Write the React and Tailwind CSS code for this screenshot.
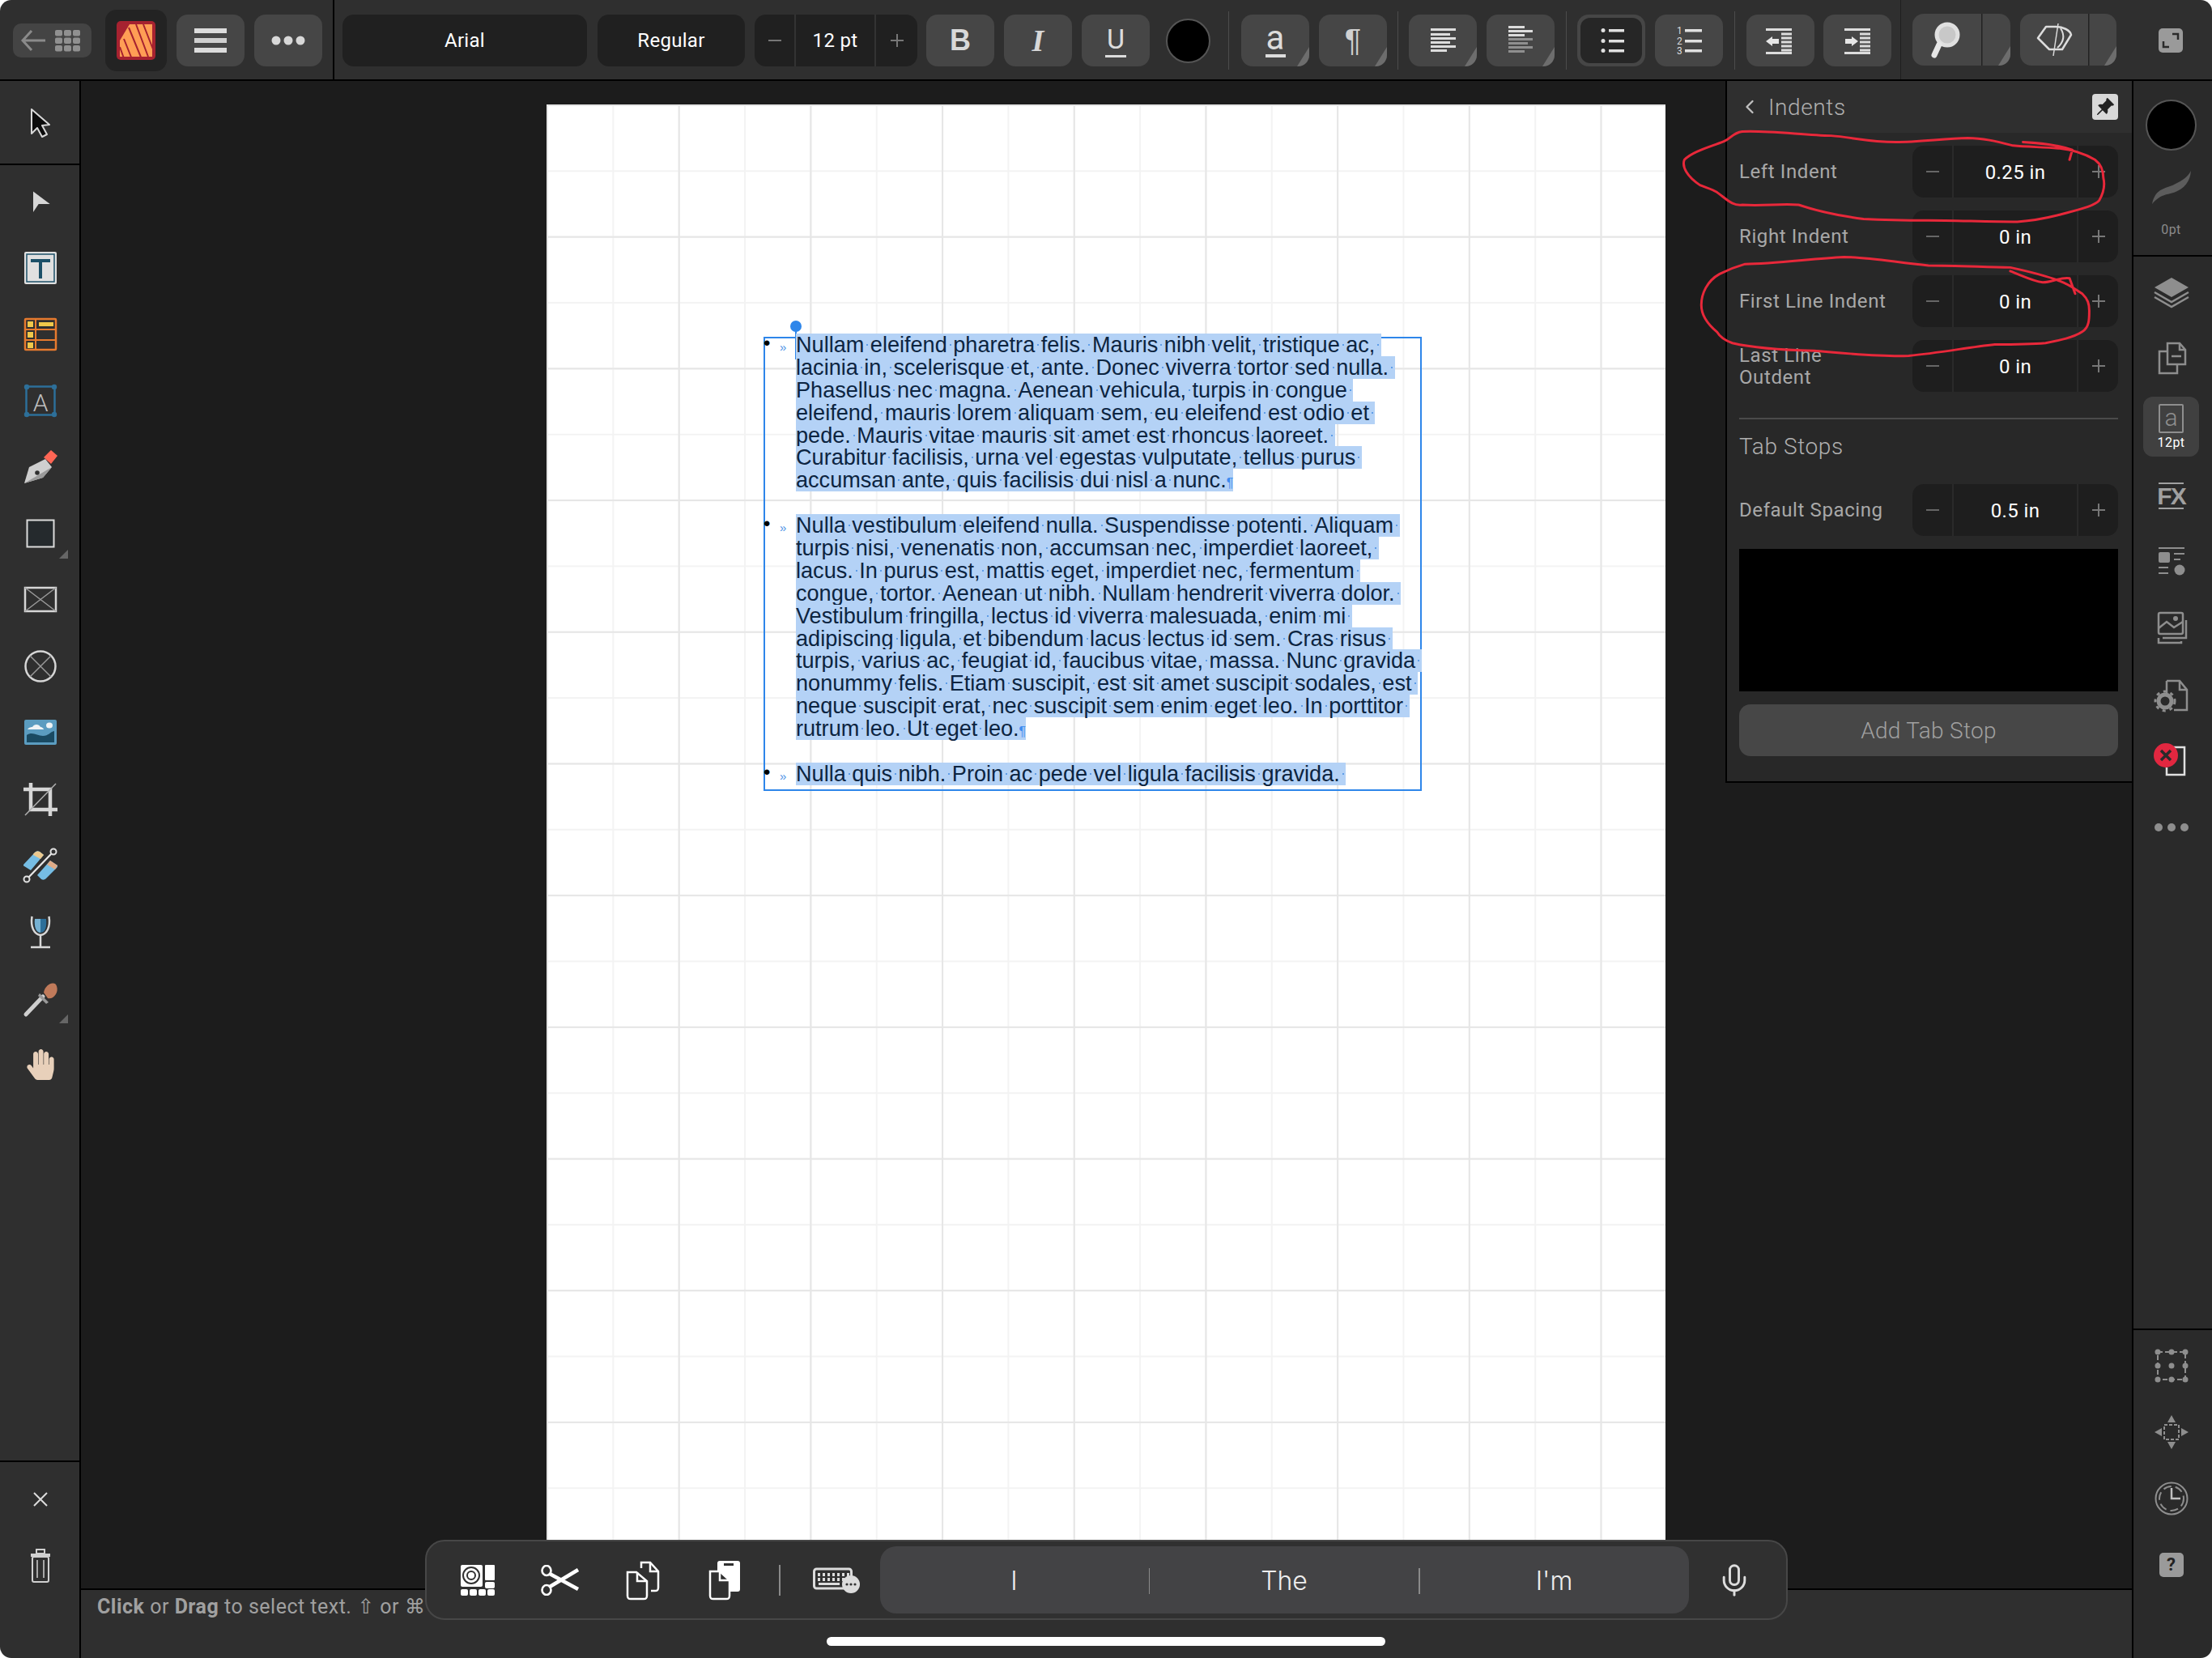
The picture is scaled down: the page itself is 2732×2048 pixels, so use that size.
import React from 'react';
import { BsPinAngleFill } from 'react-icons/bs';
import { FaHandPaper } from 'react-icons/fa';
import { Mic, ChevronLeft } from 'lucide-react';

const P1 = [
  'Nullam eleifend pharetra felis. Mauris nibh velit, tristique ac, ',
  'lacinia in, scelerisque et, ante. Donec viverra tortor sed nulla. ',
  'Phasellus nec magna. Aenean vehicula, turpis in congue ',
  'eleifend, mauris lorem aliquam sem, eu eleifend est odio et ',
  'pede. Mauris vitae mauris sit amet est rhoncus laoreet. ',
  'Curabitur facilisis, urna vel egestas vulputate, tellus purus ',
  'accumsan ante, quis facilisis dui nisl a nunc.',
];
const P2 = [
  'Nulla vestibulum eleifend nulla. Suspendisse potenti. Aliquam ',
  'turpis nisi, venenatis non, accumsan nec, imperdiet laoreet, ',
  'lacus. In purus est, mattis eget, imperdiet nec, fermentum ',
  'congue, tortor. Aenean ut nibh. Nullam hendrerit viverra dolor. ',
  'Vestibulum fringilla, lectus id viverra malesuada, enim mi ',
  'adipiscing ligula, et bibendum lacus lectus id sem. Cras risus ',
  'turpis, varius ac, feugiat id, faucibus vitae, massa. Nunc gravida ',
  'nonummy felis. Etiam suscipit, est sit amet suscipit sodales, est ',
  'neque suscipit erat, nec suscipit sem enim eget leo. In porttitor ',
  'rutrum leo. Ut eget leo.',
];
const P3 = ['Nulla quis nibh. Proin ac pede vel ligula facilisis gravida. '];

function Line({ text, pilcrow }) {
  const parts = text.split(' ');
  return (
    <div className="h-[27.9px] leading-[27.9px] whitespace-pre">
      <span className="inline-block h-[27.9px] bg-[#b4d2f6] text-[#0c2440]">
        {parts.map((w, i) => (
          <React.Fragment key={i}>
            {w}
            {i < parts.length - 1 && (
              <span className="relative">
                {' '}
                <span className="absolute left-[3px] top-[15px] w-[2px] h-[2px] bg-[#5e9de8]" />
              </span>
            )}
          </React.Fragment>
        ))}
        {pilcrow && <span className="text-[#3d8bf0] text-[16px] font-['Liberation_Sans',sans-serif]">¶</span>}
      </span>
    </div>
  );
}

function Para({ lines, pilcrow, className = '' }) {
  return (
    <div className={`relative ${className}`}>
      <span className="absolute left-[-40px] top-[-2px] text-[#000] text-[24px] leading-[27.9px]">•</span>
      <span className="absolute left-[-20px] top-[3px] text-[#4f93e6] text-[15px] leading-[27.9px]">»</span>
      {lines.map((l, i) => (
        <Line key={i} text={l} pilcrow={pilcrow && i === lines.length - 1} />
      ))}
    </div>
  );
}

function Corner() {
  return (
    <svg width="15" height="24" viewBox="0 0 15 24" className="absolute right-0 bottom-0">
      <polygon points="15,0 15,24 0,24" fill="#6d6d6d" />
    </svg>
  );
}

function Tile({ w = 'w-[84px]', corner, className = '', children }) {
  return (
    <div className={`relative h-[64px] ${w} rounded-[14px] overflow-hidden bg-[#464646] flex items-center justify-center shrink-0 ${className}`}>
      {children}
      {corner && <Corner />}
    </div>
  );
}

const Div = ({ className = '' }) => <div className={`w-[1px] h-[72px] bg-[#4c4c4c] shrink-0 ${className}`} />;

function Bars({ rows }) {
  return (
    <svg width="84" height="64" viewBox="0 0 84 64">
      {rows.map(([x, y, w, h, c], i) => (
        <rect key={i} x={x} y={y} width={w} height={h} fill={c || '#dcdcdc'} />
      ))}
    </svg>
  );
}

function TopBar() {
  return (
    <div className="h-[100px] shrink-0 bg-[#2f2f2f] border-b-2 border-black flex items-center pl-[16px] pt-[2px] relative">
      <div className="w-[97px] h-[42px] rounded-[10px] bg-[#444] flex items-center justify-center shrink-0">
        <svg width="97" height="42" viewBox="0 0 97 42">
          <path d="M40 21H13M23 9L12 21L23 33" stroke="#8a8a8a" strokeWidth="3" fill="none" />
          {[0, 1, 2].map((r) =>
            [0, 1, 2].map((c) => <rect key={`${r}${c}`} x={52 + c * 11} y={8 + r * 9.5} width="9" height="7.5" rx="2" fill="#909090" />)
          )}
        </svg>
      </div>
      <div className="ml-[17px] w-[76px] h-[76px] rounded-[14px] bg-[#232323] flex items-center justify-center shrink-0">
        <svg width="48" height="48" viewBox="0 0 48 48">
          <rect width="48" height="48" rx="5" fill="#a62230" />
          <path d="M16 4H44V44H4V24Z" fill="#ff9e55" />
          <path d="M15 8L31 47M24 4L39 44M33 4L47 40M9 22L19 47M4 32L9 46" stroke="#a62230" strokeWidth="2" fill="none" />
        </svg>
      </div>
      <Tile className="ml-[12px]">
        <Bars rows={[[22, 17, 40, 6], [22, 29, 40, 6, '#cfcfcf'], [22, 41, 40, 6]]} />
      </Tile>
      <Tile className="ml-[12px]">
        <svg width="84" height="64" viewBox="0 0 84 64">
          <circle cx="27" cy="32" r="5.5" fill="#d8d8d8" />
          <circle cx="42" cy="32" r="5.5" fill="#d8d8d8" />
          <circle cx="57" cy="32" r="5.5" fill="#d8d8d8" />
        </svg>
      </Tile>
      <div className="ml-[13px] w-[2px] h-[98px] bg-black shrink-0 -mt-[2px]" />
      <div className="ml-[10px] w-[302px] h-[64px] rounded-[14px] bg-[#202020] text-white text-[24px] flex items-center justify-center shrink-0 tracking-[0.3px]">Arial</div>
      <div className="ml-[13px] w-[182px] h-[64px] rounded-[14px] bg-[#202020] text-white text-[24px] flex items-center justify-center shrink-0 tracking-[0.3px]">Regular</div>
      <div className="ml-[12px] w-[201px] h-[64px] rounded-[14px] bg-[#202020] text-white text-[24px] flex items-center shrink-0 tracking-[0.3px]">
        <div className="w-[51px] h-full border-r-2 border-[#333] flex items-center justify-center"><span className="w-[16px] h-[2px] bg-[#777]" /></div>
        <div className="flex-1 text-center">12 pt</div>
        <div className="w-[53px] h-full border-l-2 border-[#333] flex items-center justify-center relative">
          <span className="w-[16px] h-[2px] bg-[#777]" />
          <span className="absolute w-[2px] h-[16px] bg-[#777]" />
        </div>
      </div>
      <Tile className="ml-[11px] text-[#d8d8d8] text-[36px] font-bold font-['Liberation_Sans',sans-serif]">B</Tile>
      <Tile className="ml-[12px] text-[#d8d8d8] text-[38px] font-bold italic font-['Liberation_Serif',serif]">I</Tile>
      <Tile className="ml-[12px]">
        <div className="flex flex-col items-center">
          <span className="text-[#dcdcdc] text-[34px] leading-[36px]">U</span>
          <span className="w-[26px] h-[3px] bg-[#dcdcdc] mt-[2px]" />
        </div>
      </Tile>
      <div className="ml-[20px] w-[55px] h-[55px] rounded-full bg-black border-2 border-[#555] shrink-0" />
      <Div className="ml-[22px]" />
      <Tile className="ml-[15px]" corner>
        <div className="flex flex-col items-center">
          <span className="text-[#dcdcdc] text-[42px] leading-[36px]">a</span>
          <span className="w-[25px] h-[4px] bg-[#dcdcdc] mt-[2px]" />
        </div>
      </Tile>
      <Tile className="ml-[12px] text-[#d0d0d0] text-[38px] font-['Liberation_Sans',sans-serif]" corner>¶</Tile>
      <Div className="ml-[13px]" />
      <Tile className="ml-[13px]" corner>
        <Bars rows={[[27, 17, 31, 3], [27, 23, 24, 3], [27, 28, 31, 3], [27, 33, 24, 3], [27, 38, 31, 3], [27, 43, 20, 3]]} />
      </Tile>
      <Tile className="ml-[12px]" corner>
        <Bars rows={[[27, 14, 20, 3], [27, 19, 30, 3], [27, 24, 20, 3], [27, 29, 30, 3, '#8f8f8f'], [27, 34, 24, 3, '#8f8f8f'], [27, 39, 30, 3, '#8f8f8f'], [27, 44, 20, 3, '#8f8f8f']]} />
      </Tile>
      <Div className="ml-[14px]" />
      <Tile className="ml-[13px]">
        <div className="absolute inset-[4px] rounded-[12px] bg-[#262626]" />
        <svg width="84" height="64" viewBox="0 0 84 64" className="relative">
          {[18, 31, 43].map((y) => (
            <g key={y}>
              <circle cx="32" cy={y + 1.5} r="2.5" fill="#e0e0e0" />
              <rect x="39" y={y} width="19" height="3.5" fill="#e0e0e0" />
            </g>
          ))}
        </svg>
      </Tile>
      <Tile className="ml-[12px]">
        <svg width="84" height="64" viewBox="0 0 84 64">
          {[['1', 18], ['2', 31], ['3', 43]].map(([n, y]) => (
            <g key={n}>
              <text x="27" y={y + 6} fontSize="12" fill="#dcdcdc" fontFamily="Roboto">{n}</text>
              <rect x="37" y={y} width="21" height="3.5" fill="#e0e0e0" />
            </g>
          ))}
        </svg>
      </Tile>
      <Div className="ml-[14px]" />
      <Tile className="ml-[14px]">
        <svg width="84" height="64" viewBox="0 0 84 64">
          <rect x="24" y="17" width="32" height="3" fill="#dcdcdc" />
          <rect x="24" y="46" width="32" height="3" fill="#dcdcdc" />
          {[23, 28, 33, 38, 43].map((y) => <rect key={y} x="43" y={y - 0.5} width="13" height="3" fill="#dcdcdc" />)}
          <path d="M24 33L32 27V30H40V36H32V39Z" fill="#e6e6e6" />
        </svg>
      </Tile>
      <Tile className="ml-[11px]">
        <svg width="84" height="64" viewBox="0 0 84 64">
          <rect x="26" y="17" width="32" height="3" fill="#dcdcdc" />
          <rect x="26" y="46" width="32" height="3" fill="#dcdcdc" />
          {[23, 28, 33, 38, 43].map((y) => <rect key={y} x="45" y={y - 0.5} width="13" height="3" fill="#dcdcdc" />)}
          <path d="M43 33L35 27V30H27V36H35V39Z" fill="#e6e6e6" />
        </svg>
      </Tile>
      <div className="ml-[11px] w-[1px] h-[98px] bg-[#1f1f1f] shrink-0 -mt-[2px]" />
      <Tile w="w-[121px]" className="ml-[14px] -mt-[2px]" corner>
        <svg width="121" height="64" viewBox="0 0 121 64" className="absolute left-0 top-0">
          <circle cx="43" cy="26" r="13" fill="#c8c8c8" stroke="#e0e0e0" strokeWidth="5" />
          <path d="M33 38L27 51" stroke="#e6e6e6" strokeWidth="7" strokeLinecap="round" />
          <rect x="85" y="0" width="1.5" height="64" fill="#222" />
        </svg>
      </Tile>
      <Tile w="w-[119px]" className="ml-[12px] -mt-[2px]" corner>
        <svg width="119" height="64" viewBox="0 0 119 64" className="absolute left-0 top-0">
          <path d="M22 30L32 16H44C52 16 62 20 63 26L52 44H36Z" fill="none" stroke="#dcdcdc" strokeWidth="2.5" strokeLinejoin="round" />
          <path d="M47 12L41 52" stroke="#dcdcdc" strokeWidth="1.5" />
          <path d="M50 18C55 26 55 34 46 42" stroke="#dcdcdc" strokeWidth="2" fill="none" />
          <rect x="84" y="0" width="1.5" height="64" fill="#222" />
        </svg>
      </Tile>
      <div className="ml-[52px] w-[30px] h-[30px] rounded-[5px] bg-[#9a9a9a] shrink-0">
        <svg width="30" height="30" viewBox="0 0 30 30">
          <path d="M17 7H24V14M13 23H6V16" stroke="#2a2a2a" strokeWidth="2.5" fill="none" />
        </svg>
      </div>
    </div>
  );
}

const ToolBox = ({ corner, children }) => (
  <div className="relative h-[82px] flex items-center justify-center">
    <svg width="60" height="60" viewBox="0 0 60 60">{children}</svg>
    {corner && (
      <svg width="11" height="11" viewBox="0 0 11 11" className="absolute left-[71px] top-[61px]">
        <polygon points="11,0 11,11 0,11" fill="#666" />
      </svg>
    )}
  </div>
);

function LeftBar() {
  return (
    <div className="w-[100px] shrink-0 bg-[#2f2f2f] border-r-2 border-black flex flex-col">
      <div className="h-[104px] shrink-0 border-b-2 border-black flex items-center justify-center pl-[2px] pt-[2px]">
        <svg width="60" height="60" viewBox="0 0 60 60">
          <path d="M19 13V43L26 36L32 47L38 44L32 33L41 32Z" fill="#0c0c0c" stroke="#d8d8d8" strokeWidth="2" strokeLinejoin="round" />
        </svg>
      </div>
      <div className="pt-[4px] pl-[2px]">
        <ToolBox><polygon points="21,17.5 41.7,33 27.7,33 21,43" fill="#d6d6d6" /></ToolBox>
        <ToolBox>
          <rect x="10" y="10" width="40" height="40" rx="2" fill="#e0e0e0" />
          <rect x="13" y="13" width="34" height="34" fill="none" stroke="#1c5068" strokeWidth="1.5" />
          <path d="M18 19H42V23H32V43H28V23H18Z" fill="#1c5068" />
        </ToolBox>
        <ToolBox>
          <rect x="11" y="11" width="38" height="38" rx="1" fill="none" stroke="#e67a2e" strokeWidth="2.5" />
          <path d="M11 24H49M11 37H49M24 11V49" stroke="#e67a2e" strokeWidth="2" />
          <rect x="14" y="14" width="7" height="7" fill="#f0c84a" />
          <rect x="14" y="27" width="7" height="7" fill="#f0c84a" />
          <rect x="14" y="40" width="7" height="7" fill="#f0c84a" />
          <rect x="28" y="15" width="18" height="5" fill="#f0c84a" />
        </ToolBox>
        <ToolBox>
          <rect x="12.5" y="12.5" width="35" height="35" fill="none" stroke="#2d6f99" strokeWidth="2.5" />
          {[[13, 13], [47, 13], [13, 47], [47, 47]].map(([x, y]) => <circle key={x + '' + y} cx={x} cy={y} r="3.2" fill="#2d6f99" />)}
          <text x="30" y="43" textAnchor="middle" fontSize="30" fontWeight="300" fill="#bdbdbd" fontFamily="Roboto">A</text>
        </ToolBox>
        <ToolBox>
          <path d="M10 50L16 30L36 20L44 30L33 43Z" fill="#cfcfcf" />
          <path d="M10 50L44 30L33 43Z" fill="#9a9a9a" />
          <circle cx="26" cy="37" r="2.8" fill="#2f2f2f" />
          <path d="M34 18L43 9L51 16L43 26Z" fill="#ff6655" />
        </ToolBox>
        <ToolBox corner>
          <rect x="13.5" y="13.5" width="33" height="33" fill="#252a2d" stroke="#dcdcdc" strokeWidth="2" />
        </ToolBox>
        <ToolBox>
          <rect x="11" y="15" width="38" height="29" fill="none" stroke="#d6d6d6" strokeWidth="2.5" />
          <path d="M11 15L49 44M49 15L11 44" stroke="#9a9a9a" strokeWidth="1.5" />
        </ToolBox>
        <ToolBox>
          <circle cx="30" cy="30" r="18.5" fill="none" stroke="#d6d6d6" strokeWidth="2.5" />
          <path d="M17 17L43 43M43 17L17 43" stroke="#9a9a9a" strokeWidth="1.5" />
        </ToolBox>
        <ToolBox>
          <rect x="10" y="14" width="40" height="31" rx="2" fill="#5b9cc0" />
          <path d="M13 33C20 28 26 34 33 34C40 34 42 29 47 28V42H13Z" fill="#1a4a62" />
          <path d="M14 26C16 23 19 23 20 23C22 19 28 19 30 23C32 23 34 25 34 26Z" fill="#eef3f5" />
          <ellipse cx="41" cy="21" rx="4" ry="3.5" fill="#eef3f5" />
        </ToolBox>
        <ToolBox>
          <path d="M18 10V43H51M9 18H42V51" stroke="#d6d6d6" strokeWidth="4.5" fill="none" />
          <path d="M11 50L49 11" stroke="#b0b0b0" strokeWidth="1.5" />
        </ToolBox>
        <ToolBox>
          <path d="M9 29L23 14C25 12 27 12 29 13L34 17L18 36L10 31C9 31 9 30 9 29Z" fill="#76bde4" />
          <path d="M21 16C24 12 27 12 29 13L34 17L30 22L21 17Z" fill="#ecc98f" />
          <path d="M26 42L42 24L51 30C51 31 51 32 50 33L37 46C35 48 33 48 31 47Z" fill="#76bde4" />
          <path d="M38 29L42 24L51 30L48 35Z" fill="#dfab87" />
          <path d="M15 45L44 15" stroke="#e8e8e8" strokeWidth="2.2" />
          <circle cx="13" cy="47" r="3.5" fill="#2f2f2f" stroke="#e0e0e0" strokeWidth="2" />
          <circle cx="46" cy="13" r="3.5" fill="#2f2f2f" stroke="#e0e0e0" strokeWidth="2" />
        </ToolBox>
        <ToolBox>
          <path d="M19.5 11C17.5 24 22 33 30 34C38 33 42.5 24 40.5 11" fill="none" stroke="#d8d8d8" strokeWidth="2.5" />
          <path d="M23 14H37C38 24 36 31 30 31C24 31 22 24 23 14Z" fill="#2d6f99" />
          <path d="M30 14H23C22 24 25 31 30 31Z" fill="#76b1d2" />
          <path d="M30 34V48M18 49H42" stroke="#d8d8d8" strokeWidth="2.5" />
        </ToolBox>
        <ToolBox corner>
          <path d="M12 50L33 28" stroke="#cfcfcf" strokeWidth="5" strokeLinecap="round" />
          <path d="M29 24L40 35L37 37L27 27Z" fill="#9a9a9a" />
          <path d="M34 23C36 12 48 8 50 15C53 23 46 32 39 30Z" fill="#c07a5a" />
        </ToolBox>
        <div className="h-[82px] flex items-center justify-center text-[#e8d0ba] text-[38px]"><FaHandPaper /></div>
      </div>
      <div className="flex-1" />
      <div className="h-[244px] shrink-0 border-t-2 border-black flex flex-col items-center pl-[2px]">
        <svg width="60" height="60" viewBox="0 0 60 60" className="mt-[16px]">
          <path d="M22 22L38 38M38 22L22 38" stroke="#dcdcdc" strokeWidth="2" />
        </svg>
        <svg width="60" height="60" viewBox="0 0 60 60" className="mt-[22px]">
          <rect x="18" y="15" width="24" height="4" fill="#d0d0d0" />
          <rect x="25" y="10" width="10" height="5" fill="none" stroke="#d0d0d0" strokeWidth="2" />
          <rect x="20" y="19" width="20" height="31" rx="2" fill="none" stroke="#d0d0d0" strokeWidth="2" />
          <path d="M26 23V45M34 23V45" stroke="#d0d0d0" strokeWidth="1.5" />
        </svg>
      </div>
    </div>
  );
}

function Stepper({ value }) {
  return (
    <div className="w-[254px] h-[64px] rounded-[14px] bg-[#1e1e1e] flex items-center text-[24px] shrink-0">
      <div className="w-[51px] h-full border-r-2 border-[#2a2a2a] flex items-center justify-center">
        <span className="w-[16px] h-[2px] bg-[#666]" />
      </div>
      <div className="flex-1 text-center text-white tracking-[0.4px] pt-[2px]">{value}</div>
      <div className="w-[51px] h-full border-l-2 border-[#2a2a2a] flex items-center justify-center relative">
        <span className="w-[16px] h-[2px] bg-[#777]" />
        <span className="absolute w-[2px] h-[16px] bg-[#777]" />
      </div>
    </div>
  );
}

function Row({ label, value, className = '' }) {
  return (
    <div className={`flex items-center justify-between ${className}`}>
      <div className="text-[#a8a8a8] text-[24px] leading-[27px] w-[200px] tracking-[0.6px] pt-[1px]">{label}</div>
      <Stepper value={value} />
    </div>
  );
}

function IndentsPanel() {
  return (
    <div className="absolute right-0 top-0 w-[502px] bg-[#282828] border-l-2 border-b-2 border-black flex flex-col">
      <div className="h-[64px] bg-[#2f2f2f] flex items-center pl-[15px] pr-[17px] text-[#b0b0b0]">
        <ChevronLeft size={28} strokeWidth={2} className="text-[#c0c0c0] ml-[-1px]" />
        <span className="ml-[9px] text-[28px] font-light tracking-[0.6px] pt-[2px]">Indents</span>
        <span className="ml-auto w-[32px] h-[32px] rounded-[4px] bg-[#d8d8d8] text-[#222] flex items-center justify-center text-[24px]"><BsPinAngleFill /></span>
      </div>
      <div className="px-[15px] pr-[17px] pt-[16px] pb-[31px] flex flex-col">
        <Row label="Left Indent" value="0.25 in" />
        <Row label="Right Indent" value="0 in" className="mt-[16px]" />
        <Row label="First Line Indent" value="0 in" className="mt-[16px]" />
        <Row label={<>Last Line<br />Outdent</>} value="0 in" className="mt-[16px]" />
        <div className="h-[2px] bg-[#4a4a4a] mt-[32px]" />
        <div className="h-[67px] flex items-center text-[#b0b0b0] text-[28px] font-light tracking-[0.6px]">Tab Stops</div>
        <Row label="Default Spacing" value="0.5 in" className="mt-[13px]" />
        <div className="h-[176px] bg-black mt-[16px]" />
        <div className="h-[64px] mt-[16px] pt-[2px] rounded-[14px] bg-[#474747] flex items-center justify-center text-[#a0a0a0] text-[28px] font-light tracking-[0.3px]">Add Tab Stop</div>
      </div>
    </div>
  );
}

const RBox = ({ children, className = '' }) => (
  <div className={`h-[82px] flex items-center justify-center ${className}`}>
    <svg width="60" height="60" viewBox="0 0 60 60">{children}</svg>
  </div>
);

function RightBar() {
  const g = '#8e8e8e';
  return (
    <div className="w-[99px] shrink-0 bg-[#2a2a2a] border-l-2 border-black flex flex-col pr-[4px]">
      <div className="h-[217px] -mr-[4px] pr-[4px] shrink-0 border-b-2 border-black flex flex-col items-center">
        <div className="mt-[23px] w-[63px] h-[63px] rounded-full bg-black border-2 border-[#555]" />
        <svg width="50" height="42" viewBox="0 0 50 42" className="mt-[25px]">
          <path d="M1 41C5 20 20 22 30 16C38 12 45 8 49 0C48 14 40 22 30 26C20 30 12 28 1 41Z" fill="#5c5c5c" />
        </svg>
        <div className="text-[#8a8a8a] text-[16px] mt-[21px] leading-[20px] tracking-[0.5px]">0pt</div>
      </div>
      <RBox className="mt-[2px]">
        <path d="M30 13L51 25L30 37L9 25Z" fill={g} />
        <path d="M9 31L30 43L51 31M9 37L30 49L51 37" fill="none" stroke={g} strokeWidth="2.5" />
      </RBox>
      <RBox>
        <path d="M25 12H40L47 20V38H25Z" fill="none" stroke={g} strokeWidth="2.5" />
        <path d="M40 12V20H47M30 28H42" stroke={g} strokeWidth="2.5" fill="none" />
        <path d="M25 22H15V49H37V38" fill="none" stroke={g} strokeWidth="2.5" />
      </RBox>
      <div className="mt-[7px] mx-auto w-[69px] h-[74px] rounded-[12px] bg-[#404040] flex flex-col items-center pt-[9px] shrink-0">
        <div className="w-[31px] h-[36px] rounded-[2px] border-2 border-[#8e8e8e] flex items-center justify-center text-[#8e8e8e] text-[30px] leading-none font-light pb-[3px]">a</div>
        <div className="text-white text-[16px] leading-[20px] mt-[2px] tracking-[0.5px]">12pt</div>
      </div>
      <div className="h-[7px] shrink-0" />
      <div className="h-[82px] flex flex-col items-center justify-center text-[#a0a0a0]">
        <div className="w-[31px] h-[2px] bg-[#a0a0a0]" />
        <div className="text-[30px] leading-[29px] font-bold font-['Liberation_Sans',sans-serif] tracking-[-2px]">FX</div>
        <div className="w-[31px] h-[2px] bg-[#a0a0a0]" />
      </div>
      <RBox>
        <rect x="14" y="12" width="32" height="2" fill={g} />
        <rect x="14" y="18" width="14" height="13" rx="2" fill={g} />
        <path d="M33 20H46M33 27H41M14 37H26M14 44H26" stroke={g} strokeWidth="2" />
        <circle cx="40" cy="40" r="6.5" fill={g} />
      </RBox>
      <RBox>
        <rect x="14" y="11" width="30" height="26" rx="2" fill="none" stroke={g} strokeWidth="2.5" />
        <path d="M14 30L24 22L33 29L44 22" fill="none" stroke={g} strokeWidth="2.5" />
        <circle cx="35" cy="18" r="3" fill={g} />
        <path d="M48 20V42H19M14 42V48H42V46" fill="none" stroke={g} strokeWidth="2.5" />
      </RBox>
      <RBox>
        <path d="M24 13H40L49 24V49H33M24 13V28" fill="none" stroke={g} strokeWidth="2.5" />
        <path d="M40 13V24H49" fill="none" stroke={g} strokeWidth="2.5" />
        <circle cx="22" cy="38" r="8" fill="none" stroke={g} strokeWidth="5" />
        <circle cx="22" cy="38" r="12" fill="none" stroke={g} strokeWidth="3" strokeDasharray="4 5" />
      </RBox>
      <RBox>
        <path d="M30 13H46V47H24V38" fill="none" stroke="#e0e0e0" strokeWidth="2.5" />
        <circle cx="23" cy="23" r="15" fill="#e22740" />
        <path d="M17 17L29 29M29 17L17 29" stroke="#2a2a2a" strokeWidth="3.5" />
      </RBox>
      <RBox>
        <circle cx="14" cy="30" r="5" fill={g} />
        <circle cx="30" cy="30" r="5" fill={g} />
        <circle cx="46" cy="30" r="5" fill={g} />
      </RBox>
      <div className="flex-1" />
      <div className="h-[407px] -mr-[4px] pr-[4px] shrink-0 border-t-2 border-black pt-[3px]">
        <RBox>
          <rect x="13" y="13" width="34" height="34" fill="none" stroke={g} strokeWidth="2" strokeDasharray="6 3" />
          {[[13, 13], [30, 13], [47, 13], [13, 30], [30, 30], [47, 30], [13, 47], [30, 47], [47, 47]].map(([x, y]) => (
            <circle key={x + '' + y} cx={x} cy={y} r="3.5" fill={g} />
          ))}
        </RBox>
        <RBox>
          <path d="M30 9L35 18H25ZM30 51L25 42H35ZM9 30L18 25V35ZM51 30L42 35V25Z" fill={g} />
          <rect x="21" y="21" width="18" height="18" fill="none" stroke={g} strokeWidth="2" strokeDasharray="4 2" />
        </RBox>
        <RBox>
          <circle cx="30" cy="30" r="19.5" fill="none" stroke={g} strokeWidth="2" />
          <circle cx="30" cy="30" r="15" fill="none" stroke={g} strokeWidth="2" strokeDasharray="10 5" />
          <path d="M30 17V30H41" stroke="#c0c0c0" strokeWidth="2.5" fill="none" />
        </RBox>
        <div className="h-[82px] flex items-center justify-center">
          <div className="w-[30px] h-[30px] rounded-[5px] bg-[#9a9a9a] flex items-center justify-center text-[#222] text-[22px] font-bold leading-none">?</div>
        </div>
      </div>
    </div>
  );
}

function Page() {
  return (
    <div className="relative w-[1382px] h-[1900px] bg-white bg-[linear-gradient(to_right,#e6e6e6_2px,transparent_2px),linear-gradient(to_bottom,#e6e6e6_2px,transparent_2px),linear-gradient(to_right,#f3f3f3_2px,transparent_2px),linear-gradient(to_bottom,#f3f3f3_2px,transparent_2px)] bg-[size:162.7px_162.7px,162.7px_162.7px,81.35px_81.35px,81.35px_81.35px]">
      <div className="absolute left-[268px] top-[287px] w-[813px] h-[561px] border-2 border-[#2e86ea]" />
      <div className="absolute left-[301px] top-[267px] w-[14px] h-[14px] rounded-full bg-[#2e86ea]" />
      <div className="absolute left-[307px] top-[275px] w-[2px] h-[40px] bg-[#2e86ea]" />
      <div className="absolute left-[308px] top-[283px] text-[27.1px] font-['Liberation_Sans',Arial,sans-serif]">
        <Para lines={P1} pilcrow />
        <Para lines={P2} pilcrow className="mt-[27.9px]" />
        <Para lines={P3} className="mt-[27.9px]" />
      </div>
    </div>
  );
}

function ShortcutBar() {
  return (
    <div className="absolute left-[525px] top-[1902px] w-[1683px] h-[99px] rounded-[24px] bg-[#303030] border-2 border-[#474747] flex items-center pl-[12px] text-white">
      <div className="w-[102px] flex justify-center">
        <svg width="44" height="40" viewBox="0 0 44 40">
          <rect x="1" y="1" width="27" height="27" rx="2" fill="#fff" />
          <circle cx="14" cy="14" r="10" fill="none" stroke="#303030" strokeWidth="2" />
          <circle cx="14" cy="14" r="5" fill="none" stroke="#303030" strokeWidth="2" />
          <rect x="31" y="1" width="12" height="19" rx="1" fill="#fff" />
          <rect x="31" y="22" width="12" height="8" rx="2" fill="#fff" />
          <rect x="1" y="31" width="9" height="8" rx="2" fill="#fff" />
          <rect x="12" y="31" width="9" height="8" rx="2" fill="#fff" />
          <rect x="23" y="31" width="9" height="8" rx="2" fill="#fff" />
          <rect x="34" y="31" width="9" height="8" rx="2" fill="#fff" />
        </svg>
      </div>
      <div className="w-[102px] flex justify-center">
        <svg width="50" height="38" viewBox="0 0 50 38">
          <ellipse cx="8" cy="7" rx="5.5" ry="6" fill="none" stroke="#fff" strokeWidth="2.6" />
          <ellipse cx="8" cy="31" rx="5.5" ry="6" fill="none" stroke="#fff" strokeWidth="2.6" />
          <path d="M12 11L47 30M12 27L47 6" stroke="#fff" strokeWidth="4.5" />
        </svg>
      </div>
      <div className="w-[102px] flex justify-center">
        <svg width="44" height="50" viewBox="0 0 44 50" fill="none" stroke="#fff" strokeWidth="2.5">
          <path d="M20 10V3H31L41 14V34C41 37 40 38 37 38H32" />
          <path d="M31 3V14H41" />
          <path d="M3 15H14L27 26V44C27 47 26 48 23 48H7C4 48 3 47 3 44Z" fill="#303030" />
          <path d="M15 15V26H27" />
        </svg>
      </div>
      <div className="w-[102px] flex justify-center">
        <svg width="44" height="50" viewBox="0 0 44 50">
          <rect x="12" y="1" width="28" height="38" rx="3" fill="#fff" />
          <rect x="20" y="4" width="12" height="3" fill="#303030" />
          <path d="M3 14H15L27 25V44C27 47 26 48 23 48H7C4 48 3 47 3 44Z" fill="#303030" stroke="#fff" strokeWidth="2.5" />
          <path d="M15 14V25H27" stroke="#fff" strokeWidth="2.5" fill="none" />
        </svg>
      </div>
      <div className="ml-[15px] w-[1.5px] h-[38px] bg-[#8a8a8a]" />
      <div className="ml-[40px] w-[60px] shrink-0">
        <svg width="58" height="34" viewBox="0 0 58 34">
          <rect x="1.5" y="3" width="46" height="24" rx="3" fill="none" stroke="#dcdcdc" strokeWidth="3" />
          {[7, 13, 19, 25, 31, 37, 43].map((x) => <rect key={x} x={x - 1} y="8" width="3" height="4" fill="#dcdcdc" />)}
          {[7, 13, 19, 25, 31, 37].map((x) => <rect key={x} x={x - 1} y="14" width="3" height="4" fill="#dcdcdc" />)}
          <rect x="7" y="20" width="26" height="3" fill="#dcdcdc" />
          <circle cx="47" cy="22" r="11" fill="#dcdcdc" />
          <circle cx="42" cy="22" r="1.6" fill="#333" />
          <circle cx="47" cy="22" r="1.6" fill="#333" />
          <circle cx="52" cy="22" r="1.6" fill="#333" />
        </svg>
      </div>
      <div className="ml-[23px] pt-[2px] w-[999px] h-[83px] rounded-[20px] bg-[#434345] flex items-center font-['Inter',sans-serif] font-light text-[32px] text-[#eee] shrink-0">
        <div className="flex-1 text-center">I</div>
        <div className="w-[1.5px] h-[32px] bg-[#8a8a8a]" />
        <div className="flex-1 text-center">The</div>
        <div className="w-[1.5px] h-[32px] bg-[#8a8a8a]" />
        <div className="flex-1 text-center">I'm</div>
      </div>
      <div className="flex-1 flex justify-center pr-[8px]">
        <Mic size={44} strokeWidth={1.6} className="text-[#ddd]" />
      </div>
    </div>
  );
}

export default function App() {
  return (
    <div className="w-[2732px] h-[2048px] bg-white">
      <div className="relative w-[2732px] h-[2048px] rounded-[14px] overflow-hidden flex flex-col font-['Roboto',sans-serif]">
        <TopBar />
        <div className="flex flex-1 min-h-0">
          <LeftBar />
          <div className="flex-1 flex flex-col min-w-0">
            <div className="relative flex-1 min-h-0 bg-[#1c1c1c] pl-[575px] pt-[29px] overflow-hidden">
              <Page />
              <IndentsPanel />
            </div>
            <div className="h-[86px] shrink-0 bg-[#2f2f2f] border-t-2 border-black pl-[20px] pt-[5px] text-[#a0a0a0] text-[25px] leading-[32px] tracking-[0.5px] whitespace-nowrap overflow-hidden">
              <b className="font-bold">Click</b> or <b className="font-bold">Drag</b> to select text. <span className="font-['DejaVu_Sans',sans-serif]">⇧</span> or ⌘
            </div>
          </div>
          <RightBar />
        </div>
        <ShortcutBar />
        <div className="absolute left-[1021px] top-[2022px] w-[690px] h-[11px] rounded-full bg-white" />
        <svg className="absolute left-0 top-0 pointer-events-none" width="2732" height="2048" viewBox="0 0 1568 1175" fill="none" stroke="#e8283a" strokeWidth="1.7" strokeLinecap="round" strokeLinejoin="round">
          <path d="M1434 100.5C1445 101 1460 103 1469 106L1467 113M1427 103C1415 100 1405 97.6 1395 97.6C1378 98 1360 100.5 1344 100.5C1325 100.5 1312 97 1298 96C1278 95.5 1252 92 1235 93C1228 94 1227 98 1222 100C1212 104 1200 107 1194 113C1192 118 1196 125 1205 131C1210 133 1214 134 1217 136C1224 141 1228 146 1235 145C1250 146 1262 144 1275 145C1290 150 1305 153 1321 155C1340 156 1350 156 1367 156C1385 156 1410 157 1430 157C1445 156 1452 154 1460 152C1475 148 1484 146 1488 142C1492 135 1492 130 1491 126C1491 120 1489 116 1485 113C1478 109 1470 106 1460 105C1448 104 1437 104 1427 103Z" />
          <path d="M1425 192C1433 195 1441 199 1448 200C1455 200 1460 196 1467 197L1471 208M1425 189.4C1405 189 1385 188 1367 188C1345 186 1325 182 1307 182C1285 183 1258 187 1237 187C1230 189 1225 191 1219 194C1210 199 1206 208 1206 216C1206 224 1211 230 1217 235C1220 240 1225 242 1228 243C1245 247 1265 248 1286 248.5C1305 250 1335 253 1353 252C1375 250 1395 246 1414 244C1425 244 1438 244 1450 243C1460 241 1470 239 1476 235C1481 232 1481 226 1481 220C1481 215 1480 212 1476 208C1470 204 1466 201 1460 199C1450 195 1437 192 1425 189.4Z" />
        </svg>
      </div>
    </div>
  );
}
